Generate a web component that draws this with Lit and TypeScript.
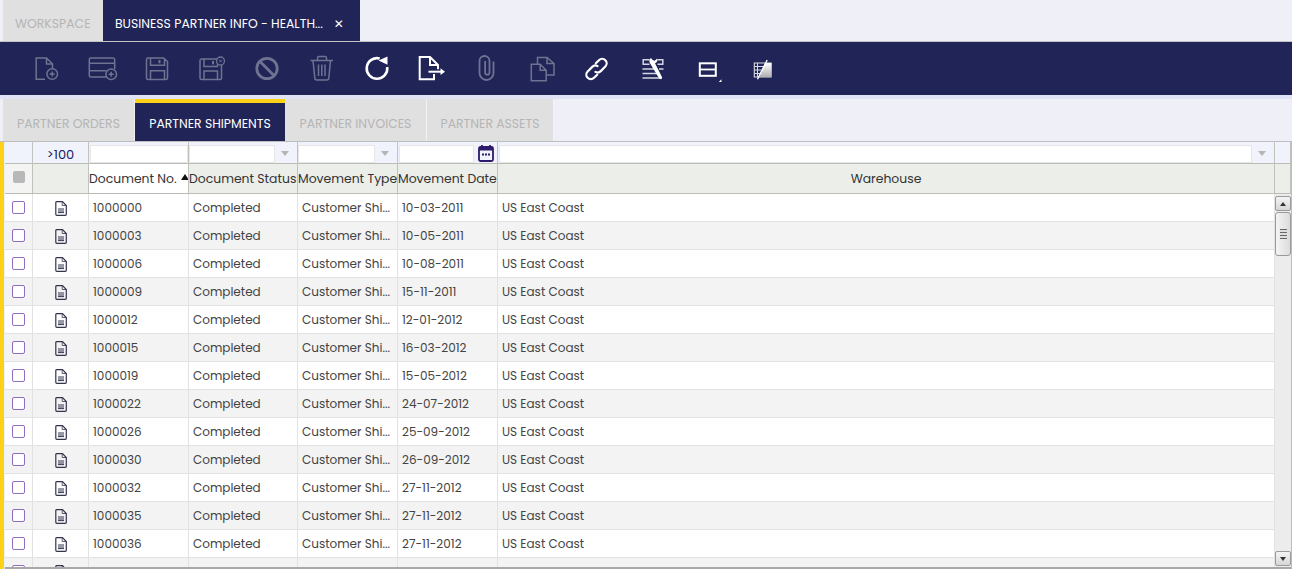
import { LitElement, html, css, svg } from "lit";
import { customElement } from "lit/decorators.js";

const docs = ["1000000","1000003","1000006","1000009","1000012","1000015","1000019","1000022","1000026","1000030","1000032","1000035","1000036","1000040"];
const dates = ["10-03-2011","10-05-2011","10-08-2011","15-11-2011","12-01-2012","16-03-2012","15-05-2012","24-07-2012","25-09-2012","26-09-2012","27-11-2012","27-11-2012","27-11-2012","27-12-2012"];

const NAVY = "#202457";
const D = "#6f7391";
const W = "#ffffff";

const badge = (cx: number, cy: number) => svg`<circle cx=${cx} cy=${cy} r="5.300" fill=${NAVY} stroke=${D} stroke-width="1.500"/><path d="M${cx - 2.500} ${cy}h5M${cx} ${cy - 2.500}v5" stroke=${D} stroke-width="1.500"/>`;

const tools = [
  svg`<g fill="none" stroke=${D} stroke-width="1.500"><path d="M14 24.300H5.200V3h10.300l6 6v5M15.500 3v6h6"/></g>${badge(21.200, 19)}`,
  svg`<g fill="none" stroke=${D} stroke-width="1.500"><path d="M20 22H4.800a1.500 1.500 0 0 1-1.500-1.500V4.500A1.500 1.500 0 0 1 4.800 3h22.400a1.500 1.500 0 0 1 1.500 1.500V14M3.300 8.300h25.400M3.300 15.700h17"/></g>${badge(25.200, 19.300)}`,
  svg`<g fill="none" stroke=${D} stroke-width="1.500"><path d="M7 3h15.500l4 3.500v16.500a1.500 1.500 0 0 1-1.500 1.500H7a1.500 1.500 0 0 1-1.500-1.500V4.500A1.500 1.500 0 0 1 7 3zM9.500 3v7.300h14V3M9.500 24.500v-8.800h14v8.800"/></g><rect x="17.500" y="5" width="2" height="3.300" fill=${D}/>`,
  svg`<g fill="none" stroke=${D} stroke-width="1.500"><path d="M5.500 4h16l4 3v16.500a1 1 0 0 1-1 1H5.500A1.500 1.500 0 0 1 4 23V5.500A1.500 1.500 0 0 1 5.500 4zM8 4v7.500h13.500V4M8 24.500v-8.500h13.500v8.500"/></g><rect x="16" y="6" width="2" height="3.300" fill=${D}/><circle cx="24.500" cy="6" r="4" fill=${NAVY} stroke=${D} stroke-width="1.300"/><path d="M23.200 4.700l2.600 2.600M25.800 4.700l-2.600 2.600" stroke=${D} stroke-width="1"/>`,
  svg`<g fill="none" stroke=${D} stroke-width="2.800"><circle cx="16" cy="13.500" r="10.200"/><path d="M8.800 6.300l14.400 14.400"/></g>`,
  svg`<g fill="none" stroke=${D} stroke-width="1.500"><path d="M4.500 5.500h22.500M11.500 5.500V3a1.500 1.500 0 0 1 1.500-1.500h6A1.500 1.500 0 0 1 20.500 3v2.500M7 5.500l1.800 17.500a2 2 0 0 0 2 2h10a2 2 0 0 0 2-2L24.500 5.500M12.500 9.500v11.500M15.800 9.500v11.500M19 9.500v11.500"/></g>`,
  svg`<path d="M26.200 12a10.300 10.300 0 1 1-7.500-8.500" fill="none" stroke=${W} stroke-width="2.600"/><path d="M26.500 1.500L17.500 5.500 26.500 9.800z" fill=${W}/>`,
  svg`<g fill="none" stroke=${W} stroke-width="2"><path d="M18 19V24.200H3.700V2H14l8 8v4.200M14 2v8h8"/><path d="M12.500 16.700H25"/></g><path d="M24.500 13.300L29 16.700 24.500 20z" fill=${W}/>`,
  svg`<path d="M22.500 6.500V18a7 7 0 0 1-14 0V6a5 5 0 0 1 10 0v11.500a2.200 2.200 0 0 1-4.400 0V6" fill="none" stroke=${D} stroke-width="1.800"/>`,
  svg`<g fill="none" stroke=${D} stroke-width="1.500"><path d="M5.300 9.300H14.200l6 6V25.700H5.300zM14.200 9.300v6h6"/><path d="M11.500 9V2.400h9.500l7 6.100V20H20.500M21 2.400v6.100h7"/></g>`,
  svg`<g transform="rotate(-45 15.500 14)" fill="none" stroke=${W} stroke-width="2.200" stroke-linecap="round"><path d="M12 18.500H7.500a4.500 4.500 0 0 1 0-9H14a4.500 4.500 0 0 1 4.300 3.200"/><path d="M19 9.500h4.500a4.500 4.500 0 0 1 0 9H17a4.500 4.500 0 0 1-4.300-3.200"/></g>`,
  svg`<g stroke="#d4d5e2" stroke-width="1.500" fill="none"><path d="M6.500 4.700h7M21.500 4.700h6M6.500 9.300h7M21.500 9.300h6M7.200 4.700v4.600M26.800 4.700v4.600M6.500 13.900h13M23 13.900h4.500M6.500 18.500h15M6.500 23h16.500"/></g><path d="M15 3c-1.800 1.200-2.200 3.300-1 5.300l9.300 15.500c.7 1.100 3.300 0 2.800-1.500L19 8.300c1.900-.7 3-2.700 2.200-4.800l-2.500 2.200-2-.7z" fill=${W}/>`,
  svg`<rect x="8.800" y="8.300" width="16" height="12.500" fill=${NAVY} stroke=${W} stroke-width="2"/><rect x="9" y="13.600" width="15.500" height="1.800" fill=${W}/><path d="M30.500 24.300V27h-2.700z" fill=${W}/>`,
  svg`<defs><linearGradient id="g1" x1="0" y1="0" x2="0" y2="1"><stop offset="0" stop-color="#ffffff"/><stop offset="1" stop-color="#b0b0b0"/></linearGradient></defs><path d="M8.300 8h16.700v14H8.300z" fill="none" stroke="#dcdcdc" stroke-width="1.100"/><path d="M8.300 11.500h9M8.300 15h7M8.300 18.500h6M11.500 8v14" stroke="#dcdcdc" stroke-width="1"/><path d="M19 8h6.500v14H13.500z" fill="url(#g1)"/><path d="M21.200 5L11.500 24.300" stroke=${W} stroke-width="1.400"/>`,
];

const docIcon = svg`<svg class="doc" width="12" height="15" viewBox="0 0 12 15"><path d="M1.500.7h6l3.800 3.800v8.800a1 1 0 0 1-1 1h-8.500a1 1 0 0 1-1-1V1.500a.8.8 0 0 1 .7-.8z" fill="none" stroke="#33334d" stroke-width="1.200"/><path d="M3 8h6M3 10h6M3 11.600h6" stroke="#33334d" stroke-width="1"/><path d="M7.200.7v3.800h4" fill="none" stroke="#33334d" stroke-width=".8"/></svg>`;

@customElement("app-root")
export class AppRoot extends LitElement {
  static styles = css`
    :host { display: block; width: 1292px; height: 569px; overflow: hidden; background: #eff0f7; font-family: "Poppins", "Inter", "Liberation Sans", sans-serif; }
    * { box-sizing: border-box; }
    .window-tabs { display: flex; height: 41px; padding-left: 3px; }
    .wtab { display: flex; align-items: center; font-size: 12.400px; white-space: nowrap; padding: 7px 0 0 12px; }
    .wtab.off { width: 100px; background: #e0e0e0; color: #b5b5b5; }
    .wtab.on { width: 257px; background: #202457; color: #fff; }
    .close { margin-left: 11px; font-size: 12px; font-weight: 700; font-family: "DejaVu Sans", sans-serif; }
    .rule { height: 1px; background: #c4c4c8; }
    .toolbar { display: flex; align-items: center; height: 53px; background: #202457; padding: 1px 0 0 19px; }
    .slot { width: 55px; flex: none; display: flex; justify-content: center; }
    .tool { display: block; flex: none; }
    .lav { height: 4px; background: #e0e2f5; }
    .sub-tabs { display: flex; height: 42px; padding-left: 3px; }
    .stab { display: flex; align-items: center; justify-content: center; padding-top: 8px; font-size: 12.400px; background: #e0e0e0; color: #b5b5b5; border-right: 1px solid #f2f2f2; white-space: nowrap; }
    .stab.on { background: #202457; color: #fff; border-top: 4px solid #fdd216; border-right: 0; padding-top: 4px; }
    .grid-wrap { display: flex; height: 428px; border-top: 1px solid #bdbdbd; }
    .stripe { width: 5px; flex: none; background: #fdd216; border-right: 1px solid #eceef5; }
    .grid { flex: 1; min-width: 0; display: flex; flex-direction: column; background: #fff; border-right: 1px solid #bdbdbd; border-bottom: 2px solid #a8a8a8; }
    .row { display: grid; grid-template-columns: 28px 56px 100px 109px 100px 100px 777px 16px; flex: none; }
    .filter { height: 22px; background: #f0f3fb; border-bottom: 1px solid #b9bdb5; }
    .filter > div { border-right: 1px solid #bfc3bb; display: flex; align-items: center; min-width: 0; padding: 2px 0 2px 1px; }
    .filter > .tight { padding-left: 0; }
    .filter > .count { justify-content: center; font-size: 13px; color: #1a1a5e; padding: 3px 0 0 0; }
    .inp { flex: 1; min-width: 0; height: 18px; background: #fff; border: 1px solid #e6e6e6; }
    .arrow { flex: none; width: 22px; height: 100%; display: flex; align-items: center; justify-content: center; padding-right: 2px; }
    .arrow i { display: block; width: 0; height: 0; border-left: 4px solid transparent; border-right: 4px solid transparent; border-top: 5px solid #b5b5b5; }
    .cal { flex: none; width: 23px; display: flex; justify-content: center; }
    .cal svg { display: block; margin-top: -2px; }
    .head { height: 30px; background: #eceee9; border-bottom: 1px solid #b9bdb5; }
    .head > div { border-right: 1px solid #bfc3bb; display: flex; align-items: center; font-size: 12.400px; color: #333; white-space: nowrap; overflow: hidden; position: relative; }
    .head .white { background: #fff; }
    .head .wh { justify-content: center; }
    .head .sel { justify-content: center; background: #f4f5f3; }
    .allbox { width: 12px; height: 12px; border-radius: 2px; background: #b8b8b8; margin-bottom: 4px; }
    .sort { position: absolute; left: 92px; top: 10px; width: 0; height: 0; border-left: 4px solid transparent; border-right: 4px solid transparent; border-bottom: 6px solid #111; }
    .body { flex: 1; min-height: 0; display: flex; overflow: hidden; }
    .rows { width: 1270px; flex: none; overflow: hidden; }
    .rowline { grid-template-columns: 28px 56px 100px 109px 100px 100px 777px; height: 28px; border-bottom: 1px solid #e2e2e2; background: #fff; }
    .rowline.alt { background: #f3f3f3; }
    .rowline > div { border-right: 1px solid #e2e2e2; display: flex; align-items: center; font-size: 12px; color: #444; padding: 1px 0 0 4px; white-space: nowrap; overflow: hidden; min-width: 0; }
    .rowline > .c { justify-content: center; padding: 0; }
    .box { width: 13px; height: 13px; border: 1px solid #8e6cc0; border-radius: 2px; background: #fff; }
    .doc { display: block; margin-top: 2px; }
    .scroll { flex: 1; display: flex; flex-direction: column; background: #ececec; padding: 2px 0 1px 0; }
    .sb-btn { height: 15px; flex: none; display: flex; align-items: center; justify-content: center; background: linear-gradient(#f4f4f4, #d6d6d6); border: 1px solid #9a9a9a; border-radius: 2px; }
    .sb-btn i { display: block; width: 0; height: 0; border-left: 3px solid transparent; border-right: 3px solid transparent; }
    .sb-btn .up { border-bottom: 4px solid #333; }
    .sb-btn .down { border-top: 4px solid #333; }
    .thumb { height: 44px; flex: none; margin-top: 1px; display: flex; align-items: center; justify-content: center; background: linear-gradient(90deg, #f4f4f4, #dcdcdc); border: 1px solid #9a9a9a; border-radius: 3px; }
    .thumb i { display: block; width: 7px; height: 10px; background: repeating-linear-gradient(#666 0 1px, #ddd 1px 3px); }
    .spacer { flex: 1; }
  `;

  render() {
    const subTabs: [string, number, boolean][] = [["PARTNER ORDERS", 132, false], ["PARTNER SHIPMENTS", 150, true], ["PARTNER INVOICES", 142, false], ["PARTNER ASSETS", 127, false]];
    return html`
      <div class="window-tabs">
        <div class="wtab off">WORKSPACE</div>
        <div class="wtab on">BUSINESS PARTNER INFO - HEALTH...<span class="close">✕</span></div>
      </div>
      <div class="rule"></div>
      <div class="toolbar">
        ${tools.map((t) => html`<div class="slot"><svg class="tool" width="32" height="28" viewBox="0 0 32 28">${t}</svg></div>`)}
      </div>
      <div class="lav"></div>
      <div class="sub-tabs">
        ${subTabs.map(([t, w, on]) => html`<div class="stab ${on ? "on" : ""}" style="width:${w}px">${t}</div>`)}
      </div>
      <div class="grid-wrap">
        <div class="stripe"></div>
        <div class="grid">
          <div class="row filter">
            <div></div>
            <div class="count">&gt;100</div>
            <div><div class="inp"></div></div>
            <div class="tight"><div class="inp"></div><div class="arrow"><i></i></div></div>
            <div class="tight"><div class="inp"></div><div class="arrow"><i></i></div></div>
            <div><div class="inp"></div><div class="cal"><svg width="16" height="18" viewBox="0 0 16 18"><rect x="1" y="3" width="14" height="14" rx="1.500" fill="none" stroke="#2e1a6b" stroke-width="1.800"/><rect x="1" y="3" width="14" height="3.500" fill="#2e1a6b"/><path d="M4 1v3M12 1v3" stroke="#2e1a6b" stroke-width="1.800"/><path d="M4 10.500h2M7 10.500h2M10 10.500h2" stroke="#2e1a6b" stroke-width="1.800"/></svg></div></div>
            <div><div class="inp"></div><div class="arrow"><i></i></div></div>
            <div></div>
          </div>
          <div class="row head">
            <div class="sel"><span class="allbox"></span></div>
            <div></div>
            <div class="white">Document No.<span class="sort"></span></div>
            <div>Document Status</div>
            <div>Movement Type</div>
            <div>Movement Date</div>
            <div class="wh">Warehouse</div>
            <div></div>
          </div>
          <div class="body">
            <div class="rows">
              ${docs.map((d, i) => html`
                <div class="row rowline ${i % 2 ? "alt" : ""}">
                  <div class="c"><span class="box"></span></div>
                  <div class="c">${docIcon}</div>
                  <div>${d}</div>
                  <div>Completed</div>
                  <div>Customer Shi...</div>
                  <div>${dates[i]}</div>
                  <div>US East Coast</div>
                </div>`)}
            </div>
            <div class="scroll">
              <div class="sb-btn"><i class="up"></i></div>
              <div class="thumb"><i></i></div>
              <div class="spacer"></div>
              <div class="sb-btn"><i class="down"></i></div>
            </div>
          </div>
        </div>
      </div>
    `;
  }
}
